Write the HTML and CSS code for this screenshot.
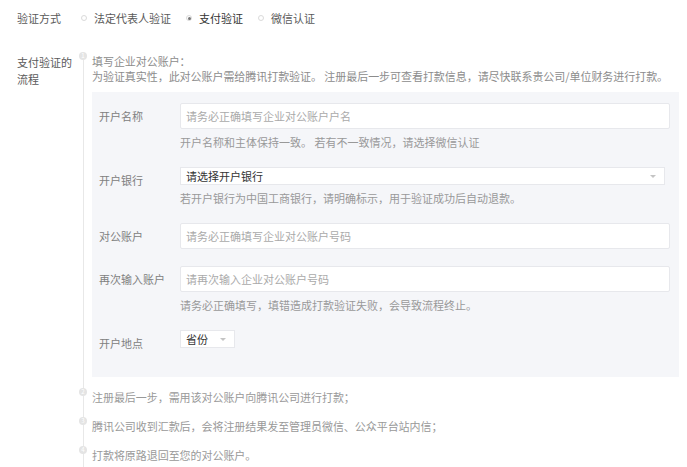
FILE: index.html
```html
<!DOCTYPE html>
<html lang="zh-CN">
<head>
<meta charset="utf-8">
<link rel="stylesheet" href="styles.css">
</head>
<body>
<div class="page">
  <div class="method-row">
    <div class="method-label">验证方式</div>
    <label class="radio"><span class="dot"></span><span class="rtext">法定代表人验证</span></label>
    <label class="radio checked"><span class="dot"></span><span class="rtext">支付验证</span></label>
    <label class="radio"><span class="dot"></span><span class="rtext">微信认证</span></label>
  </div>

  <div class="flow">
    <div class="flow-label">支付验证的<br>流程</div>
    <div class="steps">
      <div class="step first">
        <div class="rail"><span class="num">1</span><span class="line"></span></div>
        <div class="step-body">
          <div class="step-text">填写企业对公账户：</div>
          <div class="step-text">为验证真实性，此对公账户需给腾讯打款验证。 注册最后一步可查看打款信息，请尽快联系贵公司/单位财务进行打款。</div>
          <div class="form-box">
            <div class="frow">
              <div class="flabel">开户名称</div>
              <div class="field">
                <div class="input placeholder">请务必正确填写企业对公账户户名</div>
                <div class="hint">开户名称和主体保持一致。 若有不一致情况，请选择微信认证</div>
              </div>
            </div>
            <div class="frow">
              <div class="flabel">开户银行</div>
              <div class="field">
                <div class="select wide"><span>请选择开户银行</span><span class="caret"></span></div>
                <div class="hint">若开户银行为中国工商银行，请明确标示，用于验证成功后自动退款。</div>
              </div>
            </div>
            <div class="frow">
              <div class="flabel">对公账户</div>
              <div class="field">
                <div class="input placeholder">请务必正确填写企业对公账户号码</div>
              </div>
            </div>
            <div class="frow">
              <div class="flabel">再次输入账户</div>
              <div class="field">
                <div class="input placeholder">请再次输入企业对公账户号码</div>
                <div class="hint">请务必正确填写，填错造成打款验证失败，会导致流程终止。</div>
              </div>
            </div>
            <div class="frow">
              <div class="flabel">开户地点</div>
              <div class="field">
                <div class="select small"><span>省份</span><span class="caret"></span></div>
              </div>
            </div>
          </div>
        </div>
      </div>
      <div class="step">
        <div class="rail"><span class="num">2</span><span class="line"></span></div>
        <div class="step-body"><div class="step-text">注册最后一步，需用该对公账户向腾讯公司进行打款；</div></div>
      </div>
      <div class="step">
        <div class="rail"><span class="num">3</span><span class="line"></span></div>
        <div class="step-body"><div class="step-text">腾讯公司收到汇款后，会将注册结果发至管理员微信、公众平台站内信；</div></div>
      </div>
      <div class="step last">
        <div class="rail"><span class="num">4</span><span class="line"></span></div>
        <div class="step-body"><div class="step-text">打款将原路退回至您的对公账户。</div></div>
      </div>
    </div>
  </div>
</div>
</body>
</html>
```

FILE: styles.css
```css
* { box-sizing: border-box; }
body {
  margin: 0;
  background: #fff;
  font-family: "Noto Sans CJK SC", "Noto Sans", sans-serif;
  font-size: 11px;
  color: #666;
}
.page {
  padding-left: 17px;
  padding-right: 8px;
}
.method-row {
  display: flex;
  align-items: center;
  height: 36px;
}
.method-label {
  width: 64px;
  color: #5a5a5a;
}
.radio {
  display: flex;
  align-items: center;
  margin-right: 15px;
  color: #5a5a5a;
}
.radio .dot {
  width: 6px;
  height: 6px;
  border: 1px solid #dadada;
  border-radius: 50%;
  margin-right: 7px;
  display: flex;
  align-items: center;
  justify-content: center;
}
.radio.checked .dot::after {
  content: "";
  width: 3px;
  height: 3px;
  border-radius: 50%;
  background: #777;
}
.radio.checked { color: #333; }

.flow {
  display: flex;
  margin-top: 16px;
}
.flow-label {
  width: 62px;
  line-height: 17px;
  padding-top: 2px;
  color: #5a5a5a;
}
.steps {
  flex: 1;
  display: flex;
  flex-direction: column;
}
.step {
  display: flex;
}
.rail {
  width: 8px;
  display: flex;
  flex-direction: column;
  align-items: center;
  margin-right: 5px;
}
.num {
  width: 8px;
  height: 8px;
  border-radius: 50%;
  background: #e4e4e4;
  color: #fff;
  font-size: 6px;
  line-height: 8px;
  text-align: center;
  flex: none;
}
.line {
  flex: 1;
  width: 1px;
  background: #e8e8e8;
}
.step-body {
  flex: 1;
  padding-top: 2px;
  padding-bottom: 12px;
}
.step.first .step-body { padding-bottom: 11px; }
.step.last .step-body { padding-bottom: 6px; }
.step-text {
  line-height: 15px;
  color: #999;
  white-space: nowrap;
  letter-spacing: -0.05px;
}
.step.first .step-text { color: #8c8c8c; }
.form-box {
  margin-top: 8px;
  background: #f5f6f9;
  padding: 11px 9px 21px 7px;
  display: flex;
  flex-direction: column;
  gap: 17px;
}
.frow {
  display: flex;
  align-items: flex-start;
}
.flabel {
  width: 81px;
  height: 26px;
  line-height: 26px;
  color: #808080;
  flex: none;
}
.field {
  flex: 1;
  display: flex;
  flex-direction: column;
}
.input {
  height: 26px;
  background: #fff;
  border: 1px solid #e7e8ec;
  border-radius: 2px;
  padding-left: 5px;
  line-height: 24px;
}
.placeholder { color: #aaa; }
.select {
  height: 18px;
  background: #fff;
  border: 1px solid #e7e8ec;
  display: flex;
  align-items: center;
  justify-content: space-between;
  padding: 0 8px 0 5px;
  color: #333;
  line-height: 16px;
}
.select.wide { margin-right: 5px; }
.select.small { width: 55px; }
.caret {
  width: 0;
  height: 0;
  border-left: 3px solid transparent;
  border-right: 3px solid transparent;
  border-top: 3px solid #c4c4c4;
}
.hint {
  margin-top: 6px;
  line-height: 15px;
  color: #999;
  white-space: nowrap;
}
```
